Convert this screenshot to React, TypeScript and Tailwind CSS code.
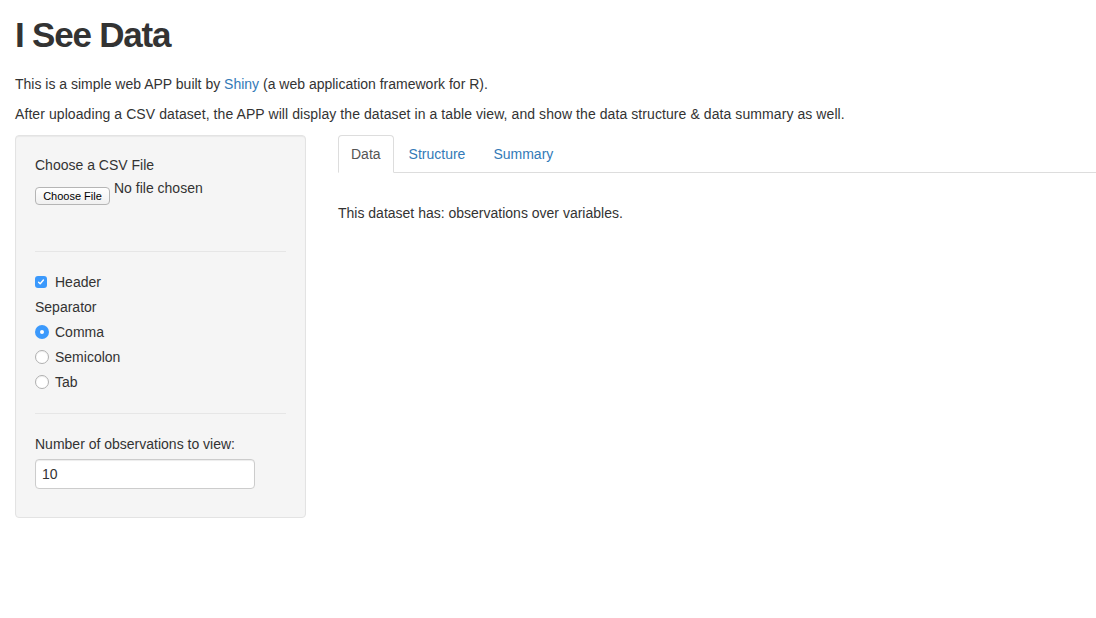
import React from "react";

const font = { fontFamily: '"Liberation Sans", Arial, sans-serif' };

function Checkbox({ checked }: { checked: boolean }) {
  return (
    <span
      className={`inline-flex h-[12px] w-[12px] items-center justify-center rounded-[3px] ${
        checked ? "bg-[#3b99fc]" : "border border-[#b4b4b4] bg-white"
      }`}
    >
      {checked && (
        <svg width="8" height="8" viewBox="0 0 8 8">
          <path d="M1.6 4.2 L3.2 5.8 L6.4 2" stroke="white" strokeWidth="1.4" fill="none" strokeLinecap="round" strokeLinejoin="round" />
        </svg>
      )}
    </span>
  );
}

function Radio({ checked }: { checked: boolean }) {
  return (
    <span
      className={`inline-flex h-[14px] w-[14px] items-center justify-center rounded-full ${
        checked ? "bg-[#3b99fc]" : "border border-[#b0b0b0] bg-white shadow-[inset_0_1px_1px_rgba(0,0,0,0.06)]"
      }`}
    >
      {checked && <span className="h-[4px] w-[4px] rounded-full bg-white" />}
    </span>
  );
}

function Option({ label, checked }: { label: string; checked: boolean }) {
  return (
    <div className="mt-[5px] flex h-[20px] items-center">
      <Radio checked={checked} />
      <span className="ml-[6px]">{label}</span>
    </div>
  );
}

export default function App() {
  return (
    <div style={font} className="min-h-[618px] bg-white pl-[15px] text-[14px] leading-[20px] text-[#333]">
      <h1 className="mt-[15px] mb-[19px] text-[35px] font-bold leading-[40px] tracking-[-1.2px]">I See Data</h1>
      <p className="mb-[10px]">
        This is a simple web APP built by <a className="text-[#337ab7]">Shiny</a> (a web application framework for R).
      </p>
      <p className="mb-[11px] tracking-[0.08px]">
        After uploading a CSV dataset, the APP will display the dataset in a table view, and show the data structure &amp;
        data summary as well.
      </p>

      <div className="flex items-start">
        {/* sidebar */}
        <div className="w-[291px] rounded-[4px] border border-[#e3e3e3] bg-[#f5f5f5] p-[19px] shadow-[inset_0_1px_1px_rgba(0,0,0,0.05)]">
          <div>Choose a CSV File</div>
          <div className="mt-[3px] flex items-start">
            <button className="mt-[9px] h-[18px] w-[75px] rounded-[4px] border border-[#b5b5b5] bg-gradient-to-b from-white to-[#f0f0f0] text-[11px] leading-[16px] text-black">
              Choose File
            </button>
            <span className="ml-[4px]">No file chosen</span>
          </div>
          <hr className="mt-[46px] border-t border-[#e6e6e6]" />

          <div className="mt-[20px] flex h-[20px] items-center">
            <Checkbox checked />
            <span className="ml-[8px]">Header</span>
          </div>
          <div className="mt-[5px]">Separator</div>
          <Option label="Comma" checked />
          <Option label="Semicolon" checked={false} />
          <Option label="Tab" checked={false} />
          <hr className="mt-[21px] border-t border-[#e6e6e6]" />

          <div className="mt-[20px]">Number of observations to view:</div>
          <input
            defaultValue="10"
            className="mt-[5px] mb-[9px] h-[30px] w-[220px] rounded-[4px] border border-[#ccc] bg-white px-[6px] text-[14px] text-[#333] shadow-[inset_0_1px_1px_rgba(0,0,0,0.075)] outline-none"
          />
        </div>

        {/* main panel */}
        <div className="ml-[32px] flex-1">
          <ul className="flex border-b border-[#ddd]">
            <li className="-mb-px">
              <a className="block rounded-t-[4px] border border-[#ddd] border-b-transparent bg-white px-[12px] py-[8px] text-[#555]">
                Data
              </a>
            </li>
            <li className="-mb-px ml-[2px]">
              <a className="block border border-transparent px-[12px] py-[8px] text-[#337ab7]">Structure</a>
            </li>
            <li className="-mb-px ml-[2px]">
              <a className="block border border-transparent px-[12px] py-[8px] text-[#337ab7]">Summary</a>
            </li>
          </ul>
          <div className="mt-[30px]">This dataset has: observations over variables.</div>
        </div>
      </div>
    </div>
  );
}
